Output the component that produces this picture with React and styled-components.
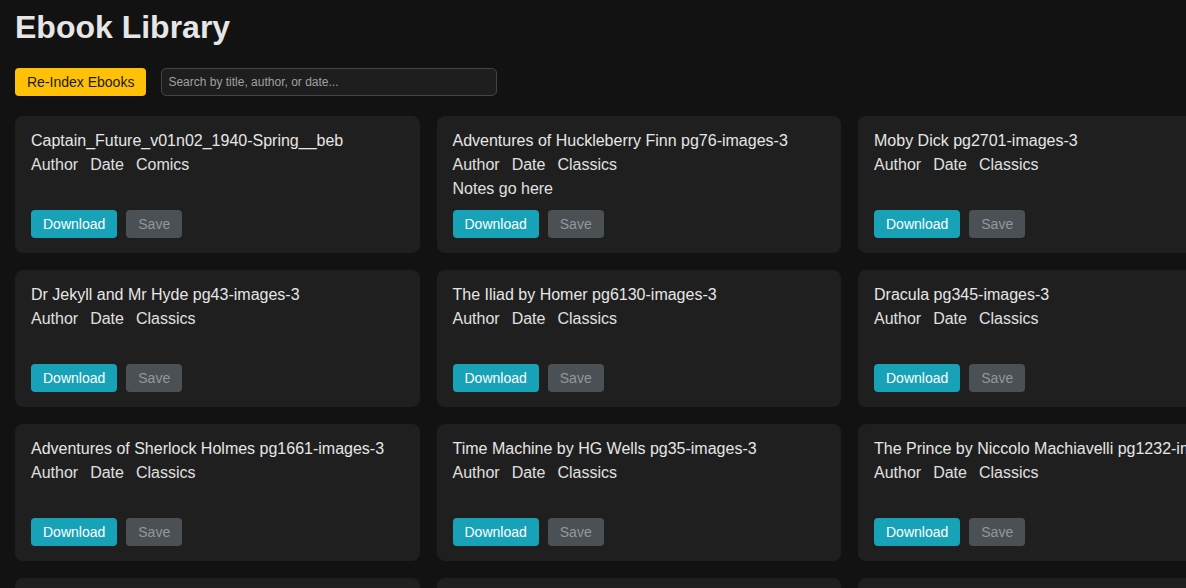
import React from 'react'
import styled, { createGlobalStyle } from 'styled-components'

const books = [
  { title: 'Captain_Future_v01n02_1940-Spring__beb', genre: 'Comics' },
  { title: 'Adventures of Huckleberry Finn pg76-images-3', genre: 'Classics', notes: 'Notes go here' },
  { title: 'Moby Dick pg2701-images-3', genre: 'Classics' },
  { title: 'Dr Jekyll and Mr Hyde pg43-images-3', genre: 'Classics' },
  { title: 'The Iliad by Homer pg6130-images-3', genre: 'Classics' },
  { title: 'Dracula pg345-images-3', genre: 'Classics' },
  { title: 'Adventures of Sherlock Holmes pg1661-images-3', genre: 'Classics' },
  { title: 'Time Machine by HG Wells pg35-images-3', genre: 'Classics' },
  { title: 'The Prince by Niccolo Machiavelli pg1232-images-3', genre: 'Classics' },
  { title: 'Pride and Prejudice pg1342-images-3', genre: 'Classics' },
  { title: 'Frankenstein pg84-images-3', genre: 'Classics' },
  { title: 'Treasure Island pg120-images-3', genre: 'Classics' },
]

function App() {
  return (
    <>
      <GlobalStyle />
      <Page>
        <Heading>Ebook Library</Heading>
        <Toolbar>
          <ReindexButton>Re-Index Ebooks</ReindexButton>
          <SearchInput placeholder="Search by title, author, or date..." />
        </Toolbar>
        <BookGrid>
          {books.map((book) => (
            <BookCard key={book.title}>
              <BookTitle>{book.title}</BookTitle>
              <MetaRow>
                <span>Author</span>
                <span>Date</span>
                <span>{book.genre}</span>
              </MetaRow>
              <Notes>{book.notes}</Notes>
              <Actions>
                <DownloadButton>Download</DownloadButton>
                <SaveButton disabled>Save</SaveButton>
              </Actions>
            </BookCard>
          ))}
        </BookGrid>
      </Page>
    </>
  )
}

const GlobalStyle = createGlobalStyle`
  html, body {
    margin: 0;
    background: #121212;
    overflow: hidden;
  }
  body {
    font-family: "Liberation Sans", Arial, sans-serif;
    color: #e0e0e0;
  }
`

const Page = styled.div`
  padding: 9px 15px 20px;
  width: max-content;
`

const Heading = styled.h1`
  margin: 0;
  font-size: 32px;
  font-weight: 700;
  line-height: 37px;
  color: #e6e6e6;
`

const Toolbar = styled.div`
  display: flex;
  align-items: center;
  gap: 15px;
  margin-top: 22px;
  margin-bottom: 20px;
`

const ReindexButton = styled.button`
  font-family: inherit;
  font-size: 14px;
  line-height: 20px;
  padding: 4px 12px;
  background: #ffc107;
  color: #1a1a1a;
  border: none;
  border-radius: 4px;
  cursor: pointer;
`

const SearchInput = styled.input`
  box-sizing: border-box;
  width: 336px;
  height: 28px;
  padding: 0 6px;
  font-family: inherit;
  font-size: 12px;
  background: #1e1e1e;
  color: #e0e0e0;
  border: 1px solid #444;
  border-radius: 5px;
  outline: none;
  &::placeholder {
    color: #a0a0a0;
  }
`

const BookGrid = styled.div`
  display: grid;
  grid-template-columns: repeat(3, 404.5px);
  gap: 17px;
`

const BookCard = styled.div`
  background: #1f1f1f;
  border-radius: 8px;
  padding: 13px 16px 15px;
  display: flex;
  flex-direction: column;
`

const BookTitle = styled.div`
  font-size: 16px;
  line-height: 24px;
  white-space: nowrap;
  color: #e6e6e6;
`

const MetaRow = styled.div`
  display: flex;
  gap: 12px;
  font-size: 16px;
  line-height: 24px;
  color: #e0e0e0;
`

const Notes = styled.div`
  font-size: 16px;
  line-height: 24px;
  min-height: 24px;
  color: #e0e0e0;
`

const Actions = styled.div`
  display: flex;
  gap: 9px;
  margin-top: 9px;
`

const BaseButton = styled.button`
  font-family: inherit;
  font-size: 14px;
  line-height: 20px;
  padding: 4px 12px;
  border: none;
  border-radius: 4px;
`

const DownloadButton = styled(BaseButton)`
  background: #17a2b8;
  color: #ffffff;
  cursor: pointer;
`

const SaveButton = styled(BaseButton)`
  background: #4b5054;
  color: #92979b;
`

export default App
